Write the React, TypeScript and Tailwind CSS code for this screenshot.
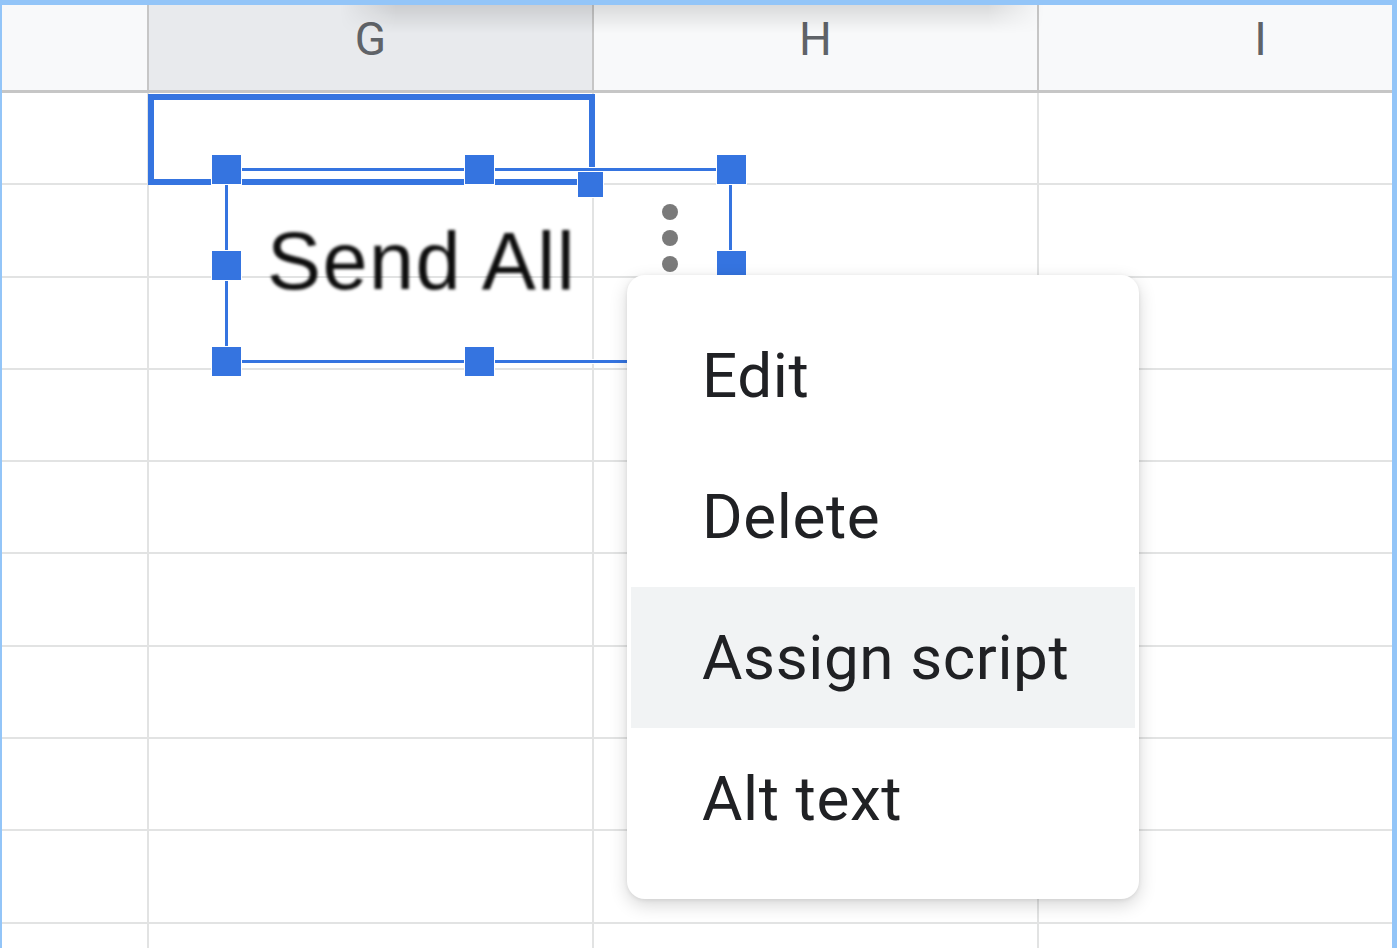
import React from "react";

const rows = Array.from({ length: 10 }, (_, i) => i);

function Handle({ x, y }: { x: number; y: number }) {
  return (
    <div
      className="absolute w-[31px] h-[31px] bg-[#3574e0] border border-white"
      style={{ left: x - 15.5, top: y - 15.5 }}
    />
  );
}

export default function App() {
  return (
    <div className="w-[1400px] h-[948px] bg-white pr-[3px] overflow-hidden font-['Roboto',sans-serif]">
      <div className="relative w-full h-full border-t-[5px] border-l-2 border-r-[5px] border-[#93c5f8] overflow-hidden flex flex-col">
        {/* Column header row */}
        <div className="flex flex-none h-[88px] border-b-[3px] border-[#c6c6c6] bg-[#f8f9fa]">
          <div className="flex-none w-[147px] border-r-2 border-[#c6c6c6]" />
          <div className="flex-none w-[445px] border-r-2 border-[#c6c6c6] bg-[#e8eaed] flex justify-center pt-[11px]">
            <span className="text-[46px] leading-none text-[#5f6368]">G</span>
          </div>
          <div className="flex-none w-[445px] border-r-2 border-[#c6c6c6] flex justify-center pt-[11px]">
            <span className="text-[46px] leading-none text-[#5f6368]">H</span>
          </div>
          <div className="flex-none w-[445px] border-r-2 border-[#c6c6c6] flex justify-center pt-[11px]">
            <span className="text-[46px] leading-none text-[#5f6368]">I</span>
          </div>
        </div>

        {/* Grid rows */}
        {rows.map((r) => (
          <div key={r} className="flex flex-none h-[92.3px] border-b-2 border-[#e2e3e3]">
            <div className="flex-none w-[147px] border-r-2 border-[#e2e3e3]" />
            <div className="flex-none w-[445px] border-r-2 border-[#e2e3e3]" />
            <div className="flex-none w-[445px] border-r-2 border-[#e2e3e3]" />
            <div className="flex-none w-[445px] border-r-2 border-[#e2e3e3]" />
          </div>
        ))}

        {/* Shadow of toolbar above */}
        <div className="absolute left-[338px] top-[-5px] w-[704px] h-[5px] bg-[linear-gradient(90deg,#93c5f8_0%,#7a9fc7_7%,#7a9fc7_93%,#93c5f8_100%)]" />
        <div className="absolute left-[338px] top-0 w-[704px] h-[28px] bg-[linear-gradient(180deg,rgba(0,0,0,0.12),rgba(0,0,0,0))] [mask-image:linear-gradient(90deg,transparent,black_8%,black_92%,transparent)]" />

        {/* Selected cell G1 */}
        <div className="absolute left-[146px] top-[89px] w-[447px] h-[91px] border-[6px] border-[#3574e0]" />
        {/* Fill handle */}
        <div className="absolute left-[575px] top-[165px] w-[27px] h-[28px] bg-[#3574e0] border border-white" />

        {/* Drawing selection frame */}
        <div className="absolute left-[222.5px] top-[162.5px] w-[507px] h-[195px] border-[3px] border-[#3574e0] shadow-[0_0_0_1px_white,inset_0_0_0_1px_white]" />

        {/* Drawing content */}
        <div className="absolute left-[265px] top-[216px] text-[81px] tracking-[1.5px] leading-none text-[#0d0d0d] font-['Liberation_Sans',Arial,sans-serif] blur-[1.4px] whitespace-nowrap">
          Send All
        </div>

        {/* Kebab dots */}
        <div className="absolute left-[660px] top-[199px] flex flex-col gap-[10px]">
          <div className="w-[16px] h-[16px] rounded-full bg-[#7a7a7a]" />
          <div className="w-[16px] h-[16px] rounded-full bg-[#7a7a7a]" />
          <div className="w-[16px] h-[16px] rounded-full bg-[#7a7a7a]" />
        </div>

        {/* Handles */}
        <Handle x={224} y={164} />
        <Handle x={477} y={164} />
        <Handle x={729} y={164} />
        <Handle x={224} y={260} />
        <Handle x={729} y={260} />
        <Handle x={224} y={356} />
        <Handle x={477} y={356} />
        <Handle x={729} y={356} />

        {/* Context menu */}
        <div className="absolute left-[625px] top-[270px] w-[512px] h-[624px] bg-white rounded-[18px] shadow-[0_6px_18px_rgba(0,0,0,0.16),0_1px_4px_rgba(0,0,0,0.08)] py-[30px] flex flex-col text-[62px] tracking-[0.6px] leading-none text-[#202124]">
          <div className="h-[141px] flex items-center pl-[75px]">Edit</div>
          <div className="h-[141px] flex items-center pl-[75px]">Delete</div>
          <div className="h-[141px] mx-[4px] bg-[#f1f3f4] flex items-center pl-[71px]">Assign script</div>
          <div className="h-[141px] flex items-center pl-[75px]">Alt text</div>
        </div>
      </div>
    </div>
  );
}
